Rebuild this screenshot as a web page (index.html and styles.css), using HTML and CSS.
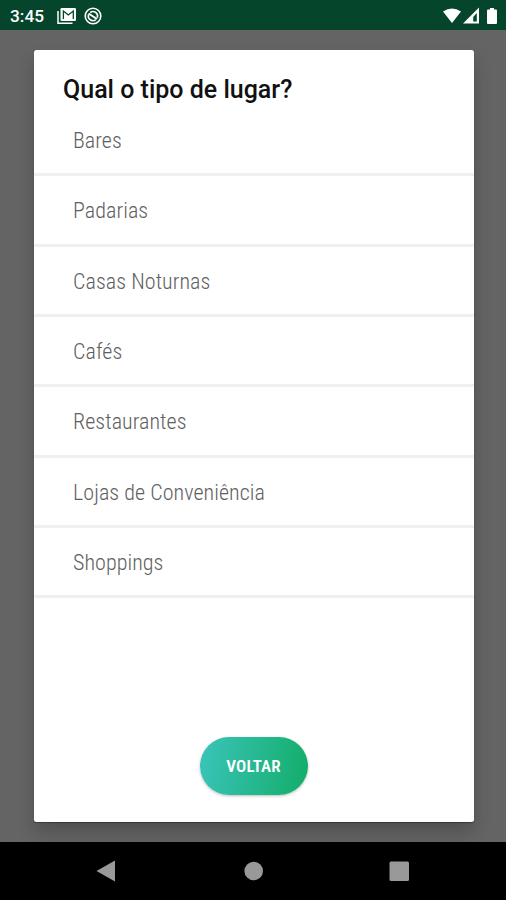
FILE: index.html
```html
<!DOCTYPE html>
<html lang="pt-BR"><head><meta charset="utf-8"><title>Lugares</title><link rel="stylesheet" href="styles.css"></head>
<body>
<header class="status"><span class="time">3:45</span>
<svg class="mail" width="20" height="18" viewBox="0 0 20 18"><path d="M1 4v12.300h14.500" fill="none" stroke="#fff" stroke-width="1.500"/><rect x="3.500" y="1" width="15.500" height="13" rx="1.300" fill="#fff"/><path d="M6.400 12V4l4.900 4L16.300 4v8" fill="none" stroke="#04452b" stroke-width="1.300"/></svg>
<svg class="sync" width="18" height="18" viewBox="0 0 18 18"><circle cx="9" cy="9" r="7.800" fill="none" stroke="#fff" stroke-width="1.600"/><path d="M4.600 7.500A4.600 4.600 0 0 0 11.800 12.600M6.200 5.500A4.600 4.600 0 0 1 13.300 10.700" fill="none" stroke="#fff" stroke-width="1.600"/><path d="M4.500 6.500l8.500 5.500" stroke="#fff" stroke-width="2"/></svg>
<svg class="signals" width="56" height="18" viewBox="0 0 56 18"><path d="M1 4.500Q10-1.500 19 4.500L10 16Z" fill="#fff"/><path fill-rule="evenodd" d="M37 .5v16H21ZM34.800 6v8.500h-3.600V10Z" fill="#fff"/><path d="M46 2.500h2V1h4v1.500h2q1 0 1 1V16q0 1-1 1h-8q-1 0-1-1V3.500q0-1 1-1Z" fill="#fff"/></svg>
</header>
<main class="backdrop"><section class="dialog"><h1>Qual o tipo de lugar?</h1>
<ul><li>Bares</li><li>Padarias</li><li>Casas Noturnas</li><li>Cafés</li><li>Restaurantes</li><li>Lojas de Conveniência</li><li>Shoppings</li></ul><button>VOLTAR</button></section></main>
<nav><svg width="506" height="58" viewBox="0 0 506 58" fill="#999"><path d="M96.500 29L115 18.500v21Z"/><circle cx="253.700" cy="29" r="9.300"/><rect x="389.500" y="19.500" width="19.500" height="19.500" rx="1.500"/></svg></nav>
</body></html>
```
FILE: styles.css
```css
*{box-sizing:border-box}
body{margin:0;width:506px;height:900px;display:flex;flex-direction:column;font-family:Roboto,sans-serif;overflow:hidden}
.status{height:30px;background:#04452b;display:flex;align-items:center;padding:1px 8px 0 10px;color:#fff}
.time{font-size:17.300px;font-weight:500;width:47px}
.sync{margin-left:7px}
.signals{margin-left:auto}
.backdrop{height:812px;background:#646464;padding:20px 32px 20px 33.500px}
.dialog{height:771.500px;background:#fff;border-radius:2.500px;box-shadow:0 1px 1px #0005,0 10px 18px #0003;display:flex;flex-direction:column}
h1{margin:0;height:56px;padding:24px 29.500px 0;font-size:25px;line-height:32px;font-weight:500;color:#111;white-space:nowrap}
ul{list-style:none;margin:0;padding:.1px 0 0}
li{height:70.300px;padding:0 39.500px;border-bottom:3px solid #f0f0f0;font-size:22px;line-height:70px;font-weight:300;color:#606060;font-stretch:75%;letter-spacing:.06px}
button{width:108px;height:58px;margin:138.500px 0 0 166px;border:0;border-radius:29px;background:linear-gradient(100deg,#3bc4bb,#12ad68);color:#fff;font:600 17px Roboto,sans-serif;font-stretch:75%;letter-spacing:.1px;box-shadow:0 1px 3px #0004}
nav{height:58px;background:#000}
nav svg{display:block}
```
